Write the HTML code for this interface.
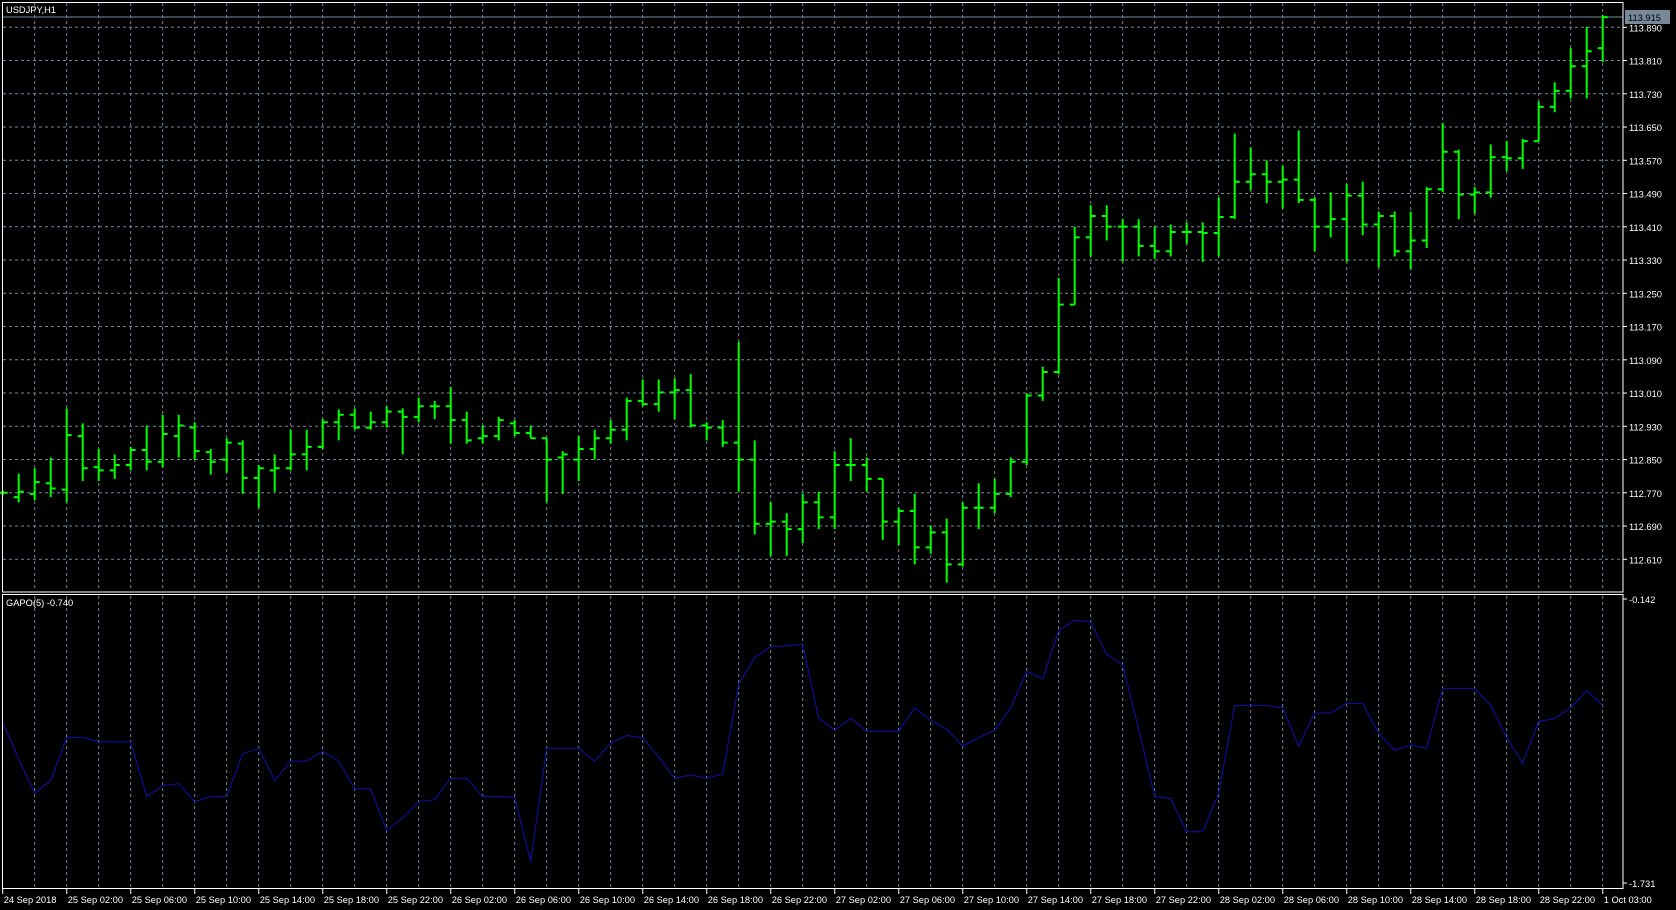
<!DOCTYPE html>
<html><head><meta charset="utf-8"><style>
html,body{margin:0;padding:0;background:#000;width:1676px;height:910px;overflow:hidden}
svg{display:block}
text{font-family:"Liberation Sans",sans-serif;font-size:9.3px;fill:#fff}
</style></head><body>
<svg id="s" width="1676" height="910" xmlns="http://www.w3.org/2000/svg"></svg>
<script>
var S=1.069,svg=document.getElementById('s'),h='';
var R=1623;
for(var x=34.7;x<R;x+=32){h+='<line x1="'+x+'" y1="3" x2="'+x+'" y2="591" stroke="#778899" stroke-dasharray="3,3"/>';h+='<line x1="'+x+'" y1="596" x2="'+x+'" y2="888" stroke="#778899" stroke-dasharray="3,3"/>';}
for(var i=0;i<17;i++){var y=27.3+33.25*i;h+='<line x1="3" y1="'+y+'" x2="'+R+'" y2="'+y+'" stroke="#778899" stroke-dasharray="3,3"/>';h+='<line x1="'+R+'" y1="'+y+'" x2="'+(R+4)+'" y2="'+y+'" stroke="#fff"/>';h+='<text x="'+(R+6)+'" y="'+(y+4)+'">'+(113.890-0.08*i).toFixed(3)+'</text>';}
var B=[[459,463,461,461],[443,470,465,460],[438,468,462,451],[428,465,452,457],[382,470,458,407],[396,450,408,438],[420,450,437,440],[425,448,440,435],[418,440,435,421],[398,440,421,432],[388,437,432,406],[388,428,408,398],[395,430,400,422],[420,444,423,432],[410,442,430,414],[412,462,415,447],[435,475,447,438],[425,460,440,438],[402,440,438,425],[402,440,425,418],[392,420,418,395],[383,412,395,388],[382,402,388,400],[385,402,400,395],[380,400,395,385],[382,425,385,390],[372,395,390,380],[375,392,380,380],[362,415,380,393],[385,415,393,412],[398,415,410,408],[390,412,408,393],[393,408,396,405],[398,410,405,410],[410,470,410,430],[422,462,428,425],[408,450,430,420],[402,430,420,410],[393,415,410,402],[372,412,402,375],[355,380,375,378],[355,385,378,367],[354,392,367,365],[350,400,365,398],[395,412,398,400],[393,418,400,414],[320,460,414,430],[412,500,430,490],[470,520,490,488],[480,520,488,495],[462,508,495,470],[460,495,470,484],[422,495,484,435],[410,450,435,435],[428,460,435,448],[448,505,448,488],[475,510,488,478],[462,528,478,512],[492,518,512,498],[485,545,498,528],[470,530,528,475],[452,495,475,475],[448,480,475,462],[428,465,462,432],[368,435,432,370],[343,375,370,348],[260,350,348,285],[212,285,285,222],[192,240,222,202],[192,225,202,212],[205,245,212,212],[205,240,212,230],[212,242,230,235],[210,240,235,217],[208,228,217,217],[208,245,217,218],[185,240,218,203],[125,205,203,170],[138,178,170,163],[150,190,163,170],[155,195,170,168],[122,190,168,187],[185,235,187,212],[180,222,212,205],[172,245,205,183],[170,220,183,210],[198,250,210,202],[198,240,202,235],[198,252,235,225],[175,232,225,177],[115,180,177,142],[140,205,142,182],[175,200,182,180],[135,185,180,147],[132,160,147,148],[130,158,148,132],[95,132,132,100],[77,105,100,85],[45,92,85,62],[25,92,62,48],[14,58,45,16]];
var g='';
B.forEach(function(b,k){var x=2.7+16*k;var H=b[0]*S,L=b[1]*S,O=b[2]*S,C=b[3]*S;if(L-H<2)L=H+2;
g+='M'+x+' '+H+'V'+L+'M'+(x-5)+' '+O+'H'+x+'M'+x+' '+C+'H'+(x+5);});
h+='<line x1="3" y1="17" x2="'+R+'" y2="17" stroke="#778899"/>';
h+='<path d="'+g+'" stroke="#00ff00" stroke-width="2" fill="none"/>';
h+='<rect x="1625" y="10" width="45" height="14" fill="#778899"/><text x="1628" y="21" style="fill:#000">113.915</text>';
var I=[676,710,742,730,690,690,694,694,694,745,735,733,750,745,745,705,700,730,712,712,703,712,738,738,777,765,750,748,728,728,745,745,746,806,700,700,700,712,695,688,690,708,728,725,728,724,640,615,605,604,603,672,683,672,684,684,684,662,674,682,698,690,683,662,628,635,590,580,582,612,622,682,745,747,778,778,742,660,660,660,662,698,667,667,658,658,686,702,697,700,644,644,644,660,690,714,675,672,662,646,660];
var p='';I.forEach(function(v,k){p+=(k?'L':'M')+(2.7+16*k)+' '+(v*S).toFixed(1);});
h+='<path d="'+p+'" stroke="#1010b0" stroke-width="1" fill="none"/>';
h+='<rect x="2.5" y="2.5" width="'+(R-2.5)+'" height="589.5" fill="none" stroke="#fff"/>';
h+='<rect x="2.5" y="594.5" width="'+(R-2.5)+'" height="294" fill="none" stroke="#fff"/>';
h+='<text x="6" y="13">USDJPY,H1</text><text x="6" y="606">GAPO(5) -0.740</text>';
h+='<line x1="'+R+'" y1="599" x2="'+(R+4)+'" y2="599" stroke="#fff"/><text x="'+(R+6)+'" y="603">-0.142</text>';
h+='<line x1="'+R+'" y1="883" x2="'+(R+4)+'" y2="883" stroke="#fff"/><text x="'+(R+6)+'" y="887">-1.731</text>';
var T=['24 Sep 2018'];var d=25,hr=2;
for(var k=1;k<26;k++){if(k==25){T.push('1 Oct 03:00');break;}T.push(d+' Sep '+(hr<10?'0':'')+hr+':00');hr+=4;if(hr>=24){hr-=24;d++;}}
T.forEach(function(t,k){var x=2.7+64*k;h+='<line x1="'+x+'" y1="889" x2="'+x+'" y2="894" stroke="#fff"/><text x="'+(x+1)+'" y="903">'+t+'</text>';});
svg.innerHTML=h;
</script>
</body></html>
